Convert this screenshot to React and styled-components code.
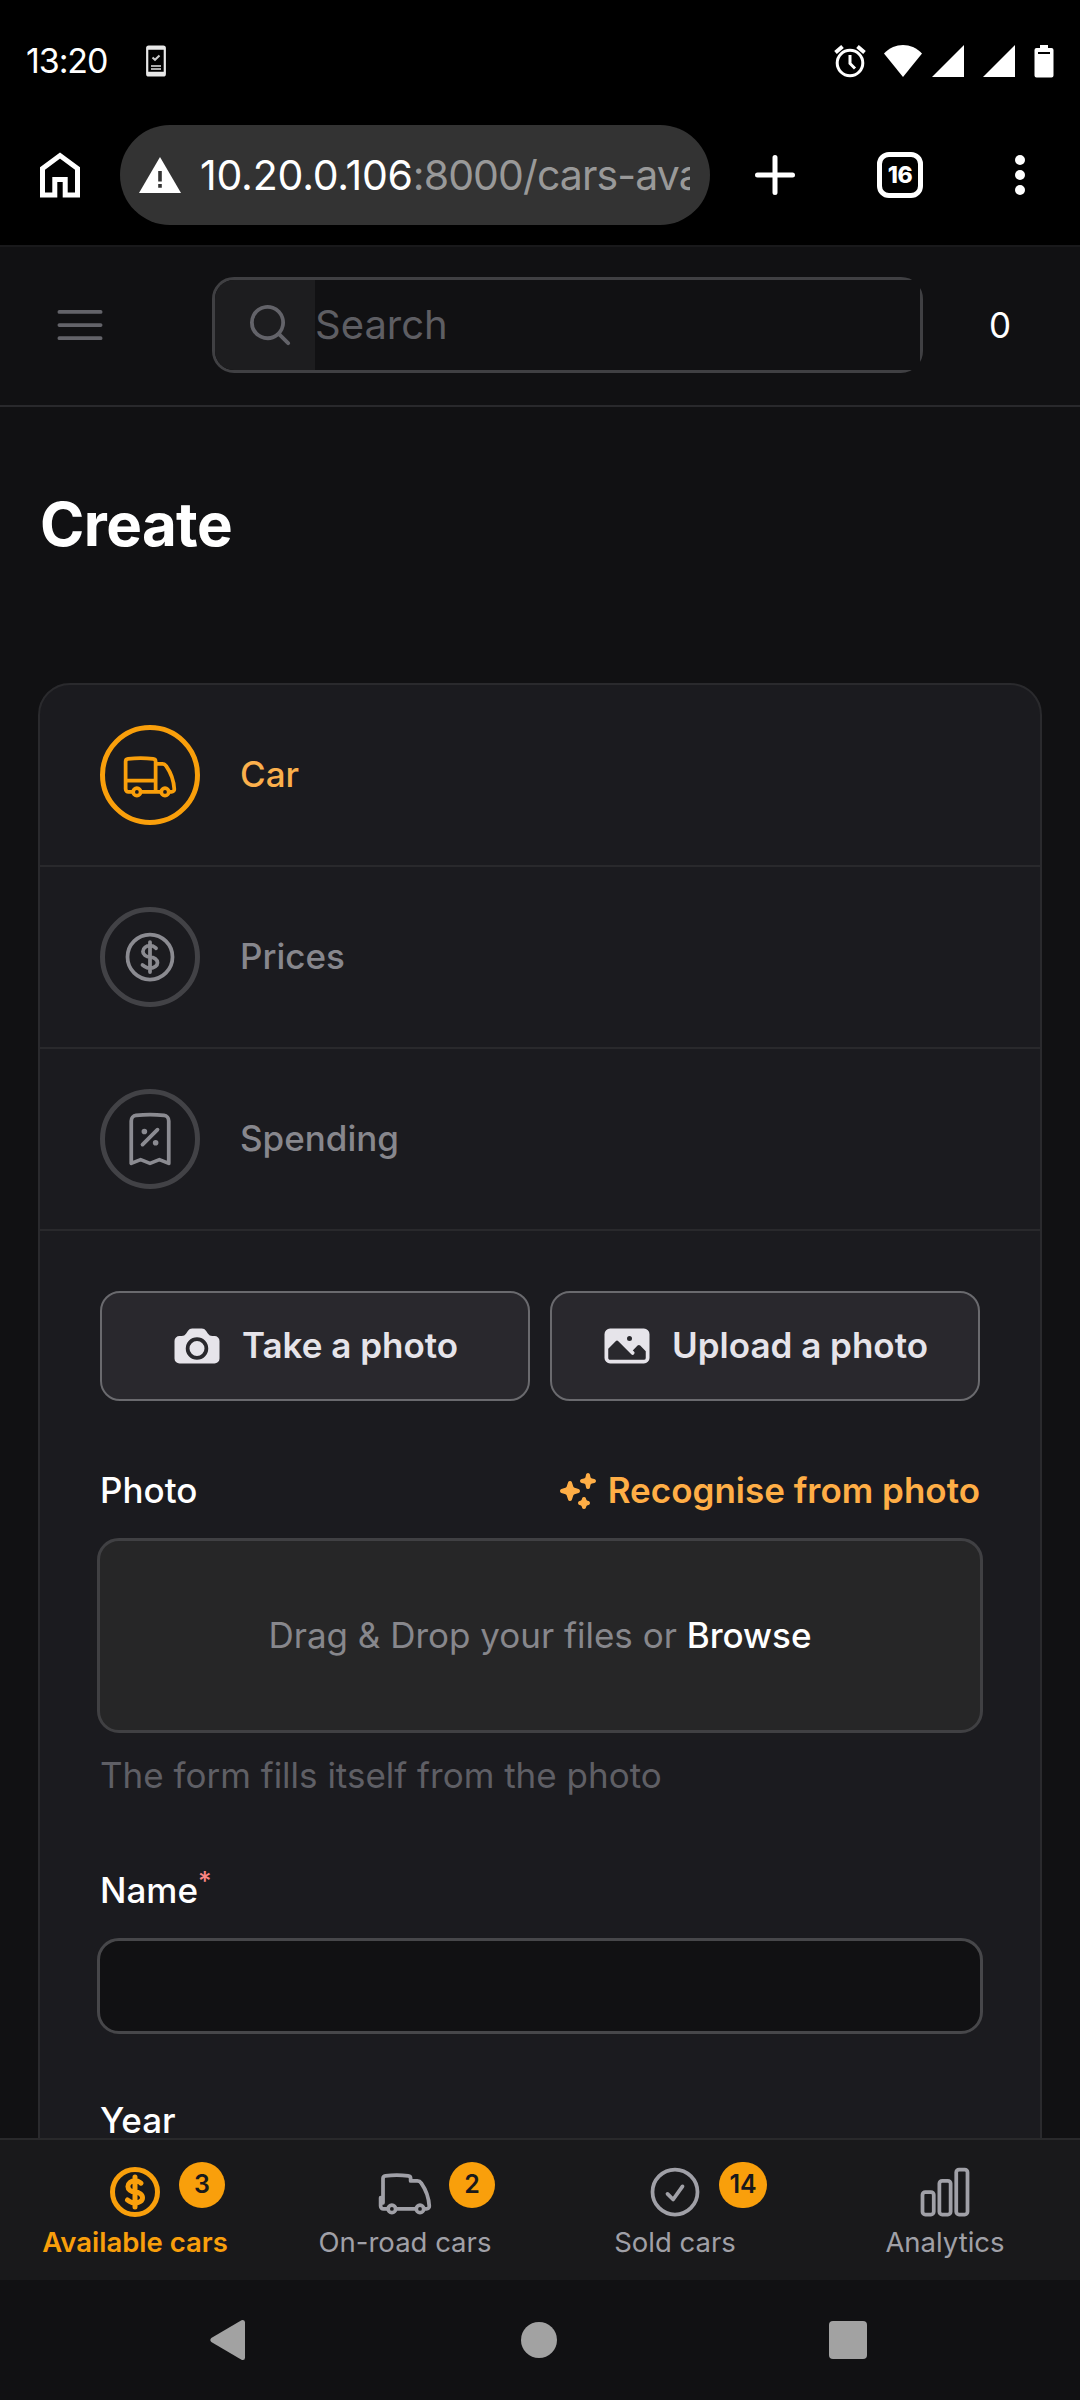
import React from 'react'
import styled, { createGlobalStyle, css } from 'styled-components'
import {
  HiOutlineBars3,
  HiMiniMagnifyingGlass,
  HiOutlineTruck,
  HiOutlineCurrencyDollar,
  HiOutlineReceiptPercent,
  HiOutlineCheckCircle,
  HiOutlineChartBar,
  HiMiniCamera,
  HiMiniPhoto,
  HiMiniSparkles,
} from 'react-icons/hi2'

const GlobalStyle = createGlobalStyle`
  * {
    box-sizing: border-box;
  }
  body {
    margin: 0;
    background: #111113;
    font-family: Inter, sans-serif;
    font-size: 35px;
    line-height: 50px;
    color: #fff;
  }
  svg {
    display: block;
    flex: none;
  }
`

const Screen = styled.div`
  width: 1080px;
  height: 2400px;
  display: flex;
  flex-direction: column;
  overflow: hidden;
`

// ---------- phone status bar ----------
const StatusBar = styled.div`
  height: 100px;
  flex: none;
  padding: 22px 26px 0 26px;
  display: flex;
  align-items: center;
  justify-content: space-between;
  background: #000;
`

const StatusGroup = styled.div`
  display: flex;
  align-items: center;
  gap: ${(props) => props.$gap || '0'};
`

const Clock = styled.span`
  width: 120px;
  font-size: 34px;
  letter-spacing: -1.1px;
`

// ---------- browser bar ----------
const BrowserBar = styled.div`
  height: 145px;
  flex: none;
  padding: 25px 0 20px;
  display: flex;
  align-items: center;
  background: #000;
`

const BarButton = styled.div`
  width: ${(props) => props.$width};
  display: flex;
  justify-content: center;
`

const UrlPill = styled.div`
  width: 590px;
  height: 100px;
  border-radius: 50px;
  background: #333;
  padding: 0 20px 0 19px;
  display: flex;
  align-items: center;
`

const UrlText = styled.div`
  flex: 1;
  margin-left: 19px;
  overflow: hidden;
  white-space: nowrap;
  font-size: 41px;
  letter-spacing: -0.9px;
  color: #999;

  b {
    color: #fff;
    font-weight: 400;
    letter-spacing: -0.2px;
  }
`

const TabCount = styled.div`
  width: 46px;
  height: 46px;
  border: 5px solid #fff;
  border-radius: 12px;
  display: flex;
  align-items: center;
  justify-content: center;
  font-size: 23px;
  font-weight: 800;
  letter-spacing: -0.5px;
`

// ---------- page header ----------
const TopBar = styled.header`
  height: 162px;
  flex: none;
  border-top: 2px solid #19191b;
  border-bottom: 2px solid #29292c;
  padding: 0 69px 2px 50px;
  display: flex;
  align-items: center;
  color: #636369;
`

const SearchBox = styled.div`
  width: 711px;
  height: 96px;
  margin: 0 auto 0 102px;
  border: 3px solid #404043;
  border-radius: 22px;
  display: flex;
`

const SearchPrefix = styled.div`
  width: 100px;
  padding-left: 30px;
  border-radius: 19px 0 0 19px;
  background: #1d1d1f;
  display: flex;
  align-items: center;
`

const SearchField = styled.div`
  flex: 1;
  background: #111113;
  font-size: 40px;
  line-height: 90px;
  color: #5e5e63;
`

const Counter = styled.span`
  color: #fff;
`

// ---------- content ----------
const Page = styled.main`
  flex: 1;
  min-height: 0;
  overflow: hidden;
  padding: 77px 38px 0;
`

const Title = styled.h1`
  margin: 0 0 119px 2px;
  height: 80px;
  font-size: 60px;
  line-height: 80px;
  font-weight: 700;
  letter-spacing: -0.6px;
`

const Card = styled.section`
  height: 1600px;
  border: 2px solid #2a2a2d;
  border-radius: 32px;
  background: #1b1b1f;
`

// Inter sits a little low next to the icons
const Text = styled.span`
  padding-bottom: 2px;
`

const Step = styled.div`
  height: 182px;
  padding: 0 60px;
  border-bottom: 2px solid #29292c;
  display: flex;
  align-items: center;
  gap: 40px;
  font-weight: 500;
  color: ${(props) => (props.$active ? '#fbb04c' : '#87878d')};
`

const StepIcon = styled.div`
  width: 100px;
  height: 100px;
  border-radius: 50%;
  border: 5px solid #424246;
  display: flex;
  align-items: center;
  justify-content: center;
  color: #8b8b91;

  ${(props) =>
    props.$active &&
    css`
      border-color: #f99f0b;
      color: #f99f0b;
    `}
`

const Form = styled.div`
  padding: 60px 60px 0;
`

const ButtonRow = styled.div`
  display: grid;
  grid-template-columns: 1fr 1fr;
  gap: 20px;
  margin-bottom: 65px;
`

const Button = styled.button`
  height: 110px;
  padding: 0;
  border: 2px solid #6a6a6e;
  border-radius: 20px;
  background: #29282d;
  color: #e6e4ea;
  font: 600 35px/50px Inter, sans-serif;
  display: flex;
  align-items: center;
  justify-content: center;
  gap: 20px;
`

const LabelRow = styled.div`
  height: 50px;
  display: flex;
  align-items: center;
  justify-content: space-between;
  font-weight: 500;
`

const LinkAction = styled.a`
  display: flex;
  align-items: center;
  gap: 10px;
  font-weight: 600;
  color: #ffae46;
`

const Required = styled.sup`
  font-size: 26px;
  line-height: 0;
  vertical-align: 13px;
  color: #fb8583;
`

const DropZone = styled.div`
  height: 195px;
  margin: 22px -3px 0;
  padding-bottom: 2px;
  border: 3px solid #404043;
  border-radius: 22px;
  background: #262627;
  color: #87878c;
  display: flex;
  align-items: center;
  justify-content: center;
  white-space: pre;

  b {
    color: #fff;
    font-weight: 500;
  }
`

const Hint = styled.p`
  margin: 17px 0 66px;
  color: #5f5f65;
`

const TextField = styled.div`
  height: 96px;
  margin: 22px -3px 62px;
  border: 3px solid #47474a;
  border-radius: 22px;
  background: #111113;
`

// ---------- bottom tabs ----------
const TabBar = styled.nav`
  height: 142px;
  flex: none;
  border-top: 2px solid #29292b;
  background: #19191b;
  display: grid;
  grid-template-columns: repeat(4, 1fr);
`

const Tab = styled.div`
  padding-top: 22px;
  display: flex;
  flex-direction: column;
  align-items: center;
  font-size: 27.5px;
  line-height: 40px;
  color: #a0a0a7;

  ${(props) =>
    props.$active &&
    css`
      color: #f99f0b;
      font-weight: 600;

      svg {
        stroke-width: 2;
      }
    `}
`

const TabIcon = styled.div`
  position: relative;
  height: 60px;
`

const Badge = styled.span`
  position: absolute;
  left: 74px;
  top: 0;
  min-width: 46px;
  height: 46px;
  padding: 0 10.5px;
  border-radius: 23px;
  background: #f99f0b;
  color: #19191b;
  font-size: 25px;
  font-weight: 600;
  line-height: 45px;
  text-align: center;
`

const SystemBar = styled.div`
  height: 120px;
  flex: none;
  padding: 0 213px 0 210px;
  display: flex;
  align-items: center;
  justify-content: space-between;
  color: #a2a2a2;
`

const PhoneIcon = () => (
  <svg width="20" height="32" viewBox="0 0 20 32" fill="none">
    <rect x="1.2" y="1.5" width="17.6" height="29" rx="1.5" stroke="#e8e8e8" strokeWidth="2.2" />
    <path d="M1 3h18M1 28.5h18" stroke="#e8e8e8" strokeWidth="3.6" />
    <path d="M6.5 12.5l2.5 2.3 4.5-4.3" stroke="#ccc" strokeWidth="2" />
    <path d="M5 21h10M5 24h10" stroke="#aaa" strokeWidth="2" />
  </svg>
)

const AlarmIcon = () => (
  <svg width="32" height="34" viewBox="0 0 32 34" fill="none" stroke="#fff" strokeWidth="3">
    <circle cx="16" cy="19" r="12.8" />
    <path d="M16 11v8.5l5 5" />
    <path d="M1.5 8.5l7-6M30.5 8.5l-7-6" strokeWidth="4" />
  </svg>
)

const WifiIcon = () => (
  <svg width="38" height="32" viewBox="0 0 38 32" fill="#fff">
    <path d="M0 8.5C11-2.8 27-2.8 38 8.5L19 32z" />
  </svg>
)

const SignalIcon = () => (
  <svg width="32" height="32" viewBox="0 0 32 32" fill="#fff">
    <path d="M32 0v32H0z" />
  </svg>
)

const BatteryIcon = () => (
  <svg width="20" height="33" viewBox="0 0 20 33">
    <path fill="#fff" d="M6 0h8v3h3.5a2 2 0 0 1 2 2v25.5a2 2 0 0 1-2 2h-15a2 2 0 0 1-2-2V5a2 2 0 0 1 2-2H6z" />
    <path d="M4 8h12" stroke="#000" strokeWidth="2" />
  </svg>
)

const HomeIcon = () => (
  <svg width="40" height="46" viewBox="0 0 40 46" fill="none" stroke="#fff" strokeWidth="5">
    <path d="M2.5 16.5L20 3.5l17.5 13V43H25.2V27.5H14.8V43H2.5z" />
  </svg>
)

const WarningIcon = () => (
  <svg width="42" height="36" viewBox="0 0 42 36">
    <path fill="#fff" d="M21 0l21 36H0z" />
    <path d="M21 14v10.5M21 27v3.8" stroke="#333" strokeWidth="3.6" />
  </svg>
)

const PlusIcon = () => (
  <svg width="40" height="40" viewBox="0 0 40 40" stroke="#fff" strokeWidth="5" strokeLinecap="round">
    <path d="M20 2.5v35M2.5 20h35" />
  </svg>
)

const MoreIcon = () => (
  <svg width="10" height="40" viewBox="0 0 10 40" fill="#fff">
    <circle cx="5" cy="5" r="5" />
    <circle cx="5" cy="20" r="5" />
    <circle cx="5" cy="35" r="5" />
  </svg>
)

// Truck without the cargo divider, only its contour and wheels
const RoadTruckIcon = ({ size }) => (
  <svg
    width={size}
    height={size}
    viewBox="0 0 24 24"
    fill="none"
    stroke="currentColor"
    strokeWidth="1.5"
    strokeLinecap="round"
    strokeLinejoin="round"
  >
    <path d="M8.25 18.75a1.5 1.5 0 0 1-3 0m3 0a1.5 1.5 0 0 0-3 0m3 0h8.25m-11.25 0H3.375a1.125 1.125 0 0 1-1.125-1.125V14.25m17.25 4.5a1.5 1.5 0 0 1-3 0m3 0a1.5 1.5 0 0 0-3 0m3 0h1.125c.621 0 1.129-.504 1.09-1.124a17.902 17.902 0 0 0-3.213-9.193 2.056 2.056 0 0 0-1.58-.86H14.25v-.958c0-.568-.422-1.048-.987-1.106a48.554 48.554 0 0 0-9.1 0c-.56.06-.96.5-.96 1.106V16.3" />
  </svg>
)

const steps = [
  { name: 'Car', icon: HiOutlineTruck, active: true },
  { name: 'Prices', icon: HiOutlineCurrencyDollar },
  { name: 'Spending', icon: HiOutlineReceiptPercent },
]

const tabs = [
  { name: 'Available cars', icon: HiOutlineCurrencyDollar, count: 3, active: true },
  { name: 'On-road cars', icon: RoadTruckIcon, count: 2 },
  { name: 'Sold cars', icon: HiOutlineCheckCircle, count: 14 },
  { name: 'Analytics', icon: HiOutlineChartBar },
]

const App = () => {
  return (
    <Screen>
      <GlobalStyle />

      <StatusBar>
        <StatusGroup>
          <Clock>13:20</Clock>
          <PhoneIcon />
        </StatusGroup>
        <StatusGroup $gap="10px">
          <StatusGroup $gap="18px">
            <AlarmIcon />
            <WifiIcon />
          </StatusGroup>
          <StatusGroup $gap="19px">
            <SignalIcon />
            <SignalIcon />
            <BatteryIcon />
          </StatusGroup>
        </StatusGroup>
      </StatusBar>

      <BrowserBar>
        <BarButton $width="120px">
          <HomeIcon />
        </BarButton>
        <UrlPill>
          <WarningIcon />
          <UrlText>
            <b>10.20.0.106</b>:8000/cars-ava
          </UrlText>
        </UrlPill>
        <BarButton $width="130px">
          <PlusIcon />
        </BarButton>
        <BarButton $width="120px">
          <TabCount>16</TabCount>
        </BarButton>
        <BarButton $width="120px">
          <MoreIcon />
        </BarButton>
      </BrowserBar>

      <TopBar>
        <HiOutlineBars3 size={60} />
        <SearchBox>
          <SearchPrefix>
            <HiMiniMagnifyingGlass size={50} />
          </SearchPrefix>
          <SearchField>Search</SearchField>
        </SearchBox>
        <Counter>0</Counter>
      </TopBar>

      <Page>
        <Title>Create</Title>
        <Card>
          {steps.map(({ name, icon: Icon, active }) => (
            <Step key={name} $active={active}>
              <StepIcon $active={active}>
                <Icon size={60} />
              </StepIcon>
              <Text>{name}</Text>
            </Step>
          ))}

          <Form>
            <ButtonRow>
              <Button>
                <HiMiniCamera size={50} />
                <Text>Take a photo</Text>
              </Button>
              <Button>
                <HiMiniPhoto size={50} />
                <Text>Upload a photo</Text>
              </Button>
            </ButtonRow>

            <LabelRow>
              <Text>Photo</Text>
              <LinkAction>
                <HiMiniSparkles size={40} />
                <Text>Recognise from photo</Text>
              </LinkAction>
            </LabelRow>
            <DropZone>
              Drag &amp; Drop your files or <b>Browse</b>
            </DropZone>
            <Hint>The form fills itself from the photo</Hint>

            <LabelRow>
              <Text>
                Name<Required>*</Required>
              </Text>
            </LabelRow>
            <TextField />

            <LabelRow>
              <Text>Year</Text>
            </LabelRow>
          </Form>
        </Card>
      </Page>

      <TabBar>
        {tabs.map(({ name, icon: Icon, count, active }) => (
          <Tab key={name} $active={active}>
            <TabIcon>
              <Icon size={60} />
              {count && <Badge>{count}</Badge>}
            </TabIcon>
            {name}
          </Tab>
        ))}
      </TabBar>

      <SystemBar>
        <svg width="38" height="42" viewBox="0 0 38 42" fill="currentColor">
          <path d="M1.3 19L31.5 1.2Q35 .2 35 3.5v35q0 3.3-3.5 2.3L1.3 23q-2-2 0-4z" />
        </svg>
        <svg width="36" height="36" viewBox="0 0 36 36" fill="currentColor">
          <circle cx="18" cy="18" r="18" />
        </svg>
        <svg width="38" height="38" viewBox="0 0 38 38" fill="currentColor">
          <rect width="38" height="38" rx="4" />
        </svg>
      </SystemBar>
    </Screen>
  )
}

export default App
